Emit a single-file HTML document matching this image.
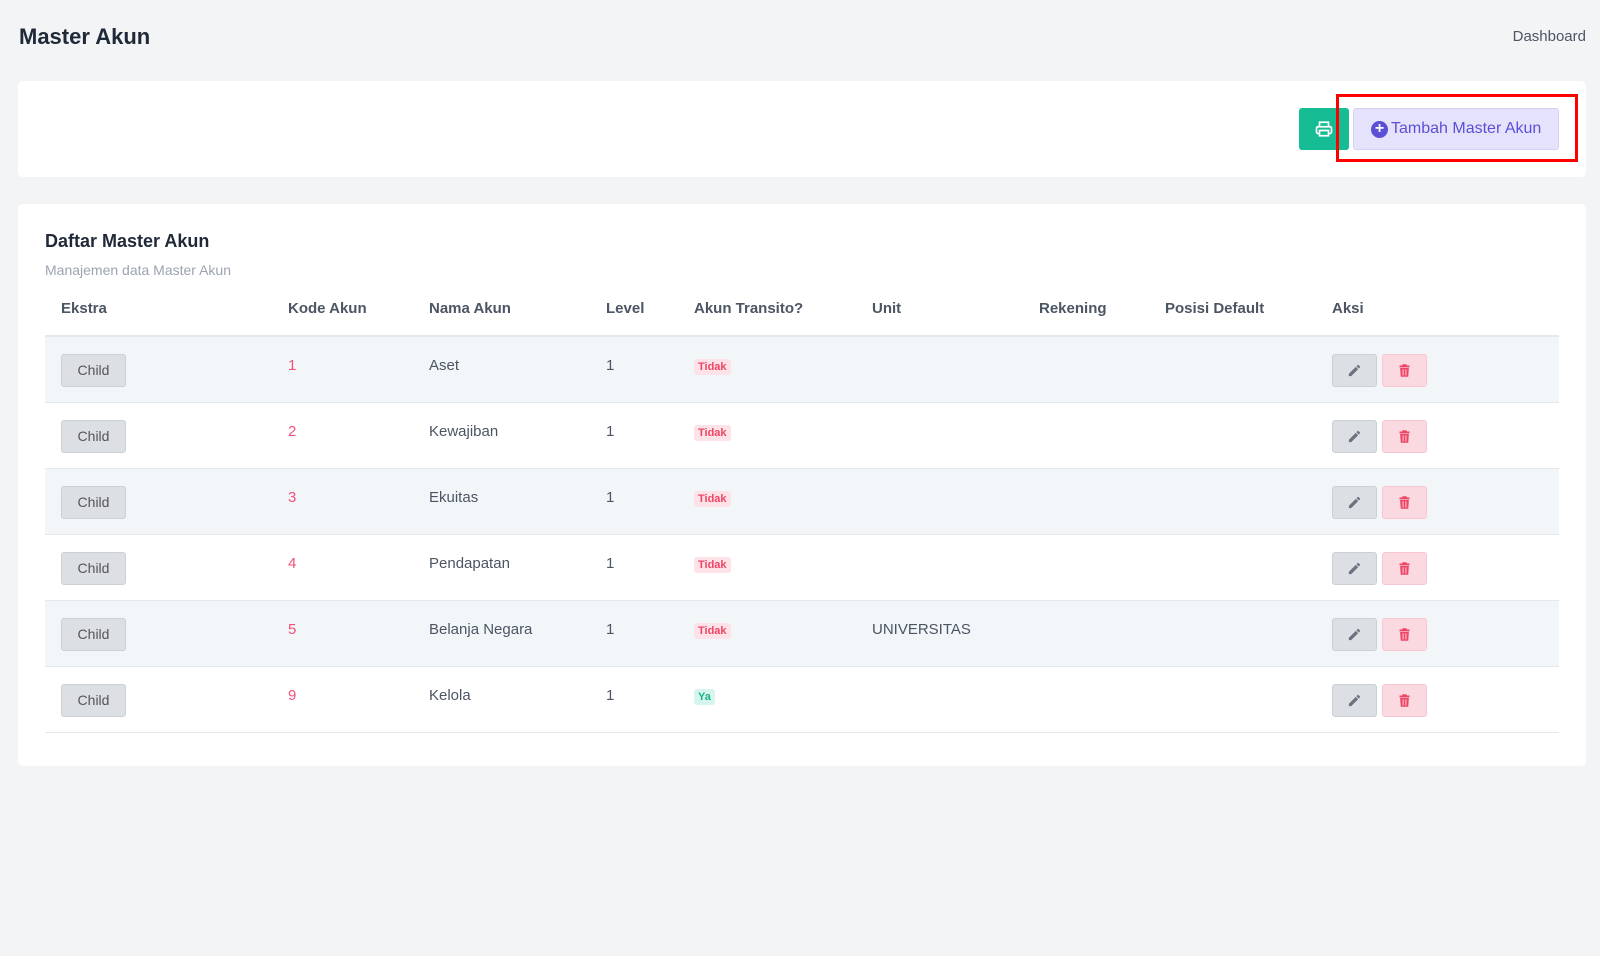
<!DOCTYPE html><html><head><style>
*{box-sizing:border-box;margin:0;padding:0}
body{width:1600px;height:956px;background:#f3f4f6;font-family:"Liberation Sans",sans-serif;color:#4b5563;position:relative;overflow:hidden}
.abs{position:absolute}
.card{position:absolute;background:#fff;border-radius:5px;left:18px;width:1568px}
.th{position:absolute;top:300px;font-size:15px;font-weight:bold;color:#4b5563}
.row{position:absolute;left:45px;width:1514px;height:66px;border-bottom:1px solid #e5e7eb}
.row.s{background:#f3f6f9}
.row span{position:absolute;top:20px;font-size:15px}
.child{position:absolute;left:16px;top:17px;width:65px;height:33px;background:#dcdfe3;border:1px solid #ccd0d5;border-radius:3px;font-size:14px;color:#555;text-align:center;line-height:31px}
.tag{position:absolute;top:22px;font-size:11px;font-weight:bold;padding:2px 4px;border-radius:3px}
.no{background:#fde2e7;color:#ef4565}.ya{background:#d7f5ec;color:#16b48a}
.ed,.dl{position:absolute;top:17px;width:45px;height:33px;border-radius:3px}
.ed{left:1287px;background:#dcdfe3;border:1px solid #ccd0d5}.dl{left:1337px;background:#fbd9e0;border:1px solid #f7c6d0}
.ed svg,.dl svg{position:absolute;left:14px;top:8px}
</style></head><body>
<div class="abs" style="left:19px;top:24px;font-size:22px;font-weight:bold;color:#1f2937">Master Akun</div>
<div class="abs" style="right:14px;top:28px;font-size:15px;color:#4b5563">Dashboard</div>
<div class="card" style="top:81px;height:96px"></div>
<div class="abs" style="left:1299px;top:108px;width:50px;height:42px;background:#16bc94;border-radius:3px">
<svg class="abs" style="left:16px;top:12px" width="18" height="18" viewBox="0 0 24 24" fill="none" stroke="#fff" stroke-width="2.2"><path d="M6 9V3h12v6M6 18H4a2 2 0 0 1-2-2v-5a2 2 0 0 1 2-2h16a2 2 0 0 1 2 2v5a2 2 0 0 1-2 2h-2M6 14h12v7H6z"/></svg></div>
<div class="abs" style="left:1353px;top:108px;width:206px;height:42px;background:#e5e3fb;border:1px solid #d5d1f5;border-radius:3px;color:#5b4fd6;font-size:16px;line-height:40px;padding-left:37px">Tambah Master Akun
<div class="abs" style="left:17px;top:12px;width:17px;height:17px;border-radius:50%;background:#5b4fd6;color:#fff;font-size:16px;line-height:16px;text-align:center;font-weight:bold">+</div></div>
<div class="abs" style="left:1336px;top:94px;width:242px;height:68px;border:3px solid #f00"></div>
<div class="card" style="top:204px;height:562px"></div>
<div class="abs" style="left:45px;top:231px;font-size:18px;font-weight:bold;color:#1f2937">Daftar Master Akun</div>
<div class="abs" style="left:45px;top:262px;font-size:14px;color:#9ca3af">Manajemen data Master Akun</div>
<div class="th" style="left:61px">Ekstra</div><div class="th" style="left:288px">Kode Akun</div><div class="th" style="left:429px">Nama Akun</div><div class="th" style="left:606px">Level</div><div class="th" style="left:694px">Akun Transito?</div><div class="th" style="left:872px">Unit</div><div class="th" style="left:1039px">Rekening</div><div class="th" style="left:1165px">Posisi Default</div><div class="th" style="left:1332px">Aksi</div>
<div class="abs" style="left:45px;top:335px;width:1514px;height:2px;background:#e5e7eb"></div>
<!--rows-->
<div class="row s" style="top:337px"><div class="child">Child</div><span style="left:243px;color:#f0527a">1</span><span style="left:384px">Aset</span><span style="left:561px">1</span><div class="tag no" style="left:649px">Tidak</div><div class="ed"><svg width="15" height="15" viewBox="0 0 24 24"><path fill="#6b7280" d="M3 17.25V21h3.75L17.8 9.94l-3.75-3.75zM20.7 7.04a1 1 0 0 0 0-1.41l-2.34-2.34a1 1 0 0 0-1.41 0l-1.83 1.83 3.75 3.75z"/></svg></div><div class="dl"><svg width="15" height="15" viewBox="0 0 24 24"><path fill="#ef4565" d="M9 2h6l1 2h4v3H4V4h4zM5 8h14l-1 14H6zm4 2v10h1.5V10zm4.5 0v10H15V10z"/></svg></div></div>
<div class="row" style="top:403px"><div class="child">Child</div><span style="left:243px;color:#f0527a">2</span><span style="left:384px">Kewajiban</span><span style="left:561px">1</span><div class="tag no" style="left:649px">Tidak</div><div class="ed"><svg width="15" height="15" viewBox="0 0 24 24"><path fill="#6b7280" d="M3 17.25V21h3.75L17.8 9.94l-3.75-3.75zM20.7 7.04a1 1 0 0 0 0-1.41l-2.34-2.34a1 1 0 0 0-1.41 0l-1.83 1.83 3.75 3.75z"/></svg></div><div class="dl"><svg width="15" height="15" viewBox="0 0 24 24"><path fill="#ef4565" d="M9 2h6l1 2h4v3H4V4h4zM5 8h14l-1 14H6zm4 2v10h1.5V10zm4.5 0v10H15V10z"/></svg></div></div>
<div class="row s" style="top:469px"><div class="child">Child</div><span style="left:243px;color:#f0527a">3</span><span style="left:384px">Ekuitas</span><span style="left:561px">1</span><div class="tag no" style="left:649px">Tidak</div><div class="ed"><svg width="15" height="15" viewBox="0 0 24 24"><path fill="#6b7280" d="M3 17.25V21h3.75L17.8 9.94l-3.75-3.75zM20.7 7.04a1 1 0 0 0 0-1.41l-2.34-2.34a1 1 0 0 0-1.41 0l-1.830 1.83 3.75 3.75z"/></svg></div><div class="dl"><svg width="15" height="15" viewBox="0 0 24 24"><path fill="#ef4565" d="M9 2h6l1 2h4v3H4V4h4zM5 8h14l-1 14H6zm4 2v10h1.5V10zm4.5 0v10H15V10z"/></svg></div></div>
<div class="row" style="top:535px"><div class="child">Child</div><span style="left:243px;color:#f0527a">4</span><span style="left:384px">Pendapatan</span><span style="left:561px">1</span><div class="tag no" style="left:649px">Tidak</div><div class="ed"><svg width="15" height="15" viewBox="0 0 24 24"><path fill="#6b7280" d="M3 17.25V21h3.75L17.8 9.94l-3.75-3.75zM20.7 7.04a1 1 0 0 0 0-1.41l-2.34-2.34a1 1 0 0 0-1.41 0l-1.83 1.83 3.75 3.75z"/></svg></div><div class="dl"><svg width="15" height="15" viewBox="0 0 24 24"><path fill="#ef4565" d="M9 2h6l1 2h4v3H4V4h4zM5 8h14l-1 14H6zm4 2v10h1.5V10zm4.5 0v10H15V10z"/></svg></div></div>
<div class="row s" style="top:601px"><div class="child">Child</div><span style="left:243px;color:#f0527a">5</span><span style="left:384px">Belanja Negara</span><span style="left:561px">1</span><div class="tag no" style="left:649px">Tidak</div><span style="left:827px">UNIVERSITAS</span><div class="ed"><svg width="15" height="15" viewBox="0 0 24 24"><path fill="#6b7280" d="M3 17.25V21h3.75L17.8 9.94l-3.75-3.75zM20.7 7.04a1 1 0 0 0 0-1.41l-2.34-2.34a1 1 0 0 0-1.41 0l-1.83 1.83 3.75 3.75z"/></svg></div><div class="dl"><svg width="15" height="15" viewBox="0 0 24 24"><path fill="#ef4565" d="M9 2h6l1 2h4v3H4V4h4zM5 8h14l-1 14H6zm4 2v10h1.5V10zm4.5 0v10H15V10z"/></svg></div></div>
<div class="row" style="top:667px"><div class="child">Child</div><span style="left:243px;color:#f0527a">9</span><span style="left:384px">Kelola</span><span style="left:561px">1</span><div class="tag ya" style="left:649px">Ya</div><div class="ed"><svg width="15" height="15" viewBox="0 0 24 24"><path fill="#6b7280" d="M3 17.25V21h3.75L17.8 9.94l-3.75-3.75zM20.7 7.04a1 1 0 0 0 0-1.41l-2.34-2.34a1 1 0 0 0-1.41 0l-1.83 1.83 3.75 3.75z"/></svg></div><div class="dl"><svg width="15" height="15" viewBox="0 0 24 24"><path fill="#ef4565" d="M9 2h6l1 2h4v3H4V4h4zM5 8h14l-1 14H6zm4 2v10h1.5V10zm4.5 0v10H15V10z"/></svg></div></div>
</body></html>
